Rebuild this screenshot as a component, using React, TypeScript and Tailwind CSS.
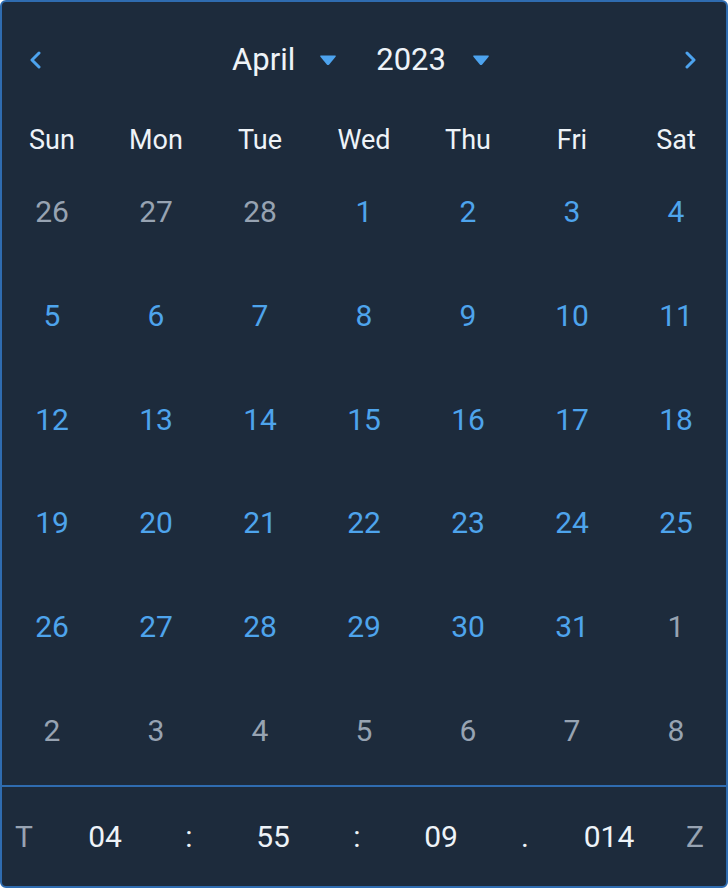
const days: { n: number; muted: boolean }[] = [
  ...[26, 27, 28].map((n) => ({ n, muted: true })),
  ...Array.from({ length: 31 }, (_, i) => ({ n: i + 1, muted: false })),
  ...[1, 2, 3, 4, 5, 6, 7, 8].map((n) => ({ n, muted: true })),
];

const weekdays = ['Sun', 'Mon', 'Tue', 'Wed', 'Thu', 'Fri', 'Sat'];

function Chevron({ dir }: { dir: 'left' | 'right' }) {
  return (
    <svg width="14" height="18" viewBox="0 0 14 18" fill="none">
      <polyline
        points={dir === 'left' ? '11,2 4,9 11,16' : '3,2 10,9 3,16'}
        stroke="#4da3ee"
        strokeWidth="3"
        strokeLinecap="round"
        strokeLinejoin="round"
      />
    </svg>
  );
}

function Caret() {
  return (
    <svg width="18" height="12" viewBox="0 0 18 12">
      <path d="M2 1.5 H16 Q17.5 1.5 16.6 2.8 L10.2 10.4 Q9 11.6 7.8 10.4 L1.4 2.8 Q0.5 1.5 2 1.5 Z" fill="#4da3ee" />
    </svg>
  );
}

export default function App() {
  const time = ['04', ':', '55', ':', '09', '.', '014'];
  return (
    <div
      className="w-[728px] h-[888px] bg-[#1d2b3c] border-2 border-[#2f6cb0] rounded-[6px] flex flex-col overflow-hidden"
      style={{ fontFamily: 'Roboto, "Noto Sans", sans-serif' }}
    >
      <div className="h-[116px] shrink-0 flex items-center justify-between pl-[26px] pr-[28px]">
        <button className="flex items-center">
          <Chevron dir="left" />
        </button>
        <div className="flex items-center text-[31px] text-[#eef3f8] mr-[4px]">
          <span>April</span>
          <span className="ml-[24px]"><Caret /></span>
          <span className="ml-[39px]">2023</span>
          <span className="ml-[26px]"><Caret /></span>
        </div>
        <button className="flex items-center">
          <Chevron dir="right" />
        </button>
      </div>

      <div className="h-[44px] shrink-0 -mx-[2px] grid grid-cols-7 items-center text-[27px] text-[#eef3f8]">
        {weekdays.map((d) => (
          <div key={d} className="text-center">{d}</div>
        ))}
      </div>

      <div className="grid grid-cols-7 grid-rows-6 h-[623px] shrink-0 -mx-[2px] text-[30px]">
        {days.map((d, i) => (
          <div
            key={i}
            className={`flex items-center justify-center pb-[5px] ${d.muted ? 'text-[#97a3b2]' : 'text-[#4ea4ec]'}`}
          >
            {d.n}
          </div>
        ))}
      </div>

      <div className="h-[2px] shrink-0 bg-[#2f6cb0]" />

      <div className="flex-1 flex items-center pb-[1px] text-[30px] text-[#eef3f8]">
        <div className="w-[61px] pl-[13px] text-[#97a3b2]">T</div>
        {time.map((t, i) => (
          <div key={i} className="w-[84px] text-center">{t}</div>
        ))}
        <div className="pl-[35px] text-[#97a3b2]">Z</div>
      </div>
    </div>
  );
}
